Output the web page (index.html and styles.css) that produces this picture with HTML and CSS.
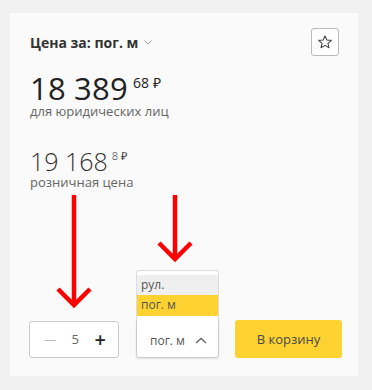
FILE: index.html
```html
<!DOCTYPE html>
<html lang="ru">
<head>
  <meta charset="UTF-8" />
  <title>Цена</title>
  <link rel="stylesheet" href="styles.css">
</head>
<body>

<div class="card">
  <div class="card-head">
    <div class="unit-title">Цена за: пог. м
      <svg class="unit-caret" width="8" height="5" viewBox="0 0 8 5"><path d="M0.5 0.5 L4 4 L7.5 0.5" fill="none" stroke="#999" stroke-width="1"/></svg>
    </div>
    <button class="fav-btn">
      <svg width="16" height="16" viewBox="0 0 24 24"><path d="M12 2.8 L14.8 9 L21.5 9.6 L16.4 14 L18 20.6 L12 17.1 L6 20.6 L7.6 14 L2.5 9.6 L9.2 9 Z" fill="none" stroke="#444" stroke-width="1.6" stroke-linejoin="round"/></svg>
    </button>
  </div>

  <div class="price-main">18 389<span class="kop">68 ₽</span></div>
  <div class="price-note">для юридических лиц</div>

  <div class="price-retail">19 168<span class="kop">8 ₽</span></div>
  <div class="price-note">розничная цена</div>

  <div class="actions">
    <div class="qty">
      <span class="qty-minus">—</span>
      <span class="qty-val">5</span>
      <span class="qty-plus">+</span>
    </div>
    <div class="unit-select">
      <ul class="unit-list">
        <li>рул.</li>
        <li class="active">пог. м</li>
      </ul>
      <span>пог. м</span>
      <svg width="12" height="7" viewBox="0 0 12 7"><path d="M1 6 L6 1.5 L11 6" fill="none" stroke="#666" stroke-width="1.4"/></svg>
    </div>
    <button class="cart-btn">В корзину</button>
  </div>

  <!-- стрелки поверх карточки -->
  <svg class="arrow arrow-left" width="40" height="115" viewBox="0 0 40 115">
    <path d="M19 0 V108" stroke="#ff0000" stroke-width="4.5"/>
    <path d="M3 94 L19 110 L35 94" fill="none" stroke="#ff0000" stroke-width="4.5"/>
  </svg>
  <svg class="arrow arrow-right" width="40" height="70" viewBox="0 0 40 70">
    <path d="M19 0 V63" stroke="#ff0000" stroke-width="4.5"/>
    <path d="M3 48 L19 64 L35 48" fill="none" stroke="#ff0000" stroke-width="4.5"/>
  </svg>
</div>

</body>
</html>
```

FILE: styles.css
```css
body {
  font-family: 'Open Sans', sans-serif;
  background-color: #f0f0f0;
  margin: 0;
  padding: 13px 14px 12px 10px;
}

.card {
  position: relative;
  background: #fafafa;
  padding: 14px 14px 18px 20px;
}

.card-head {
  display: flex;
  justify-content: space-between;
  align-items: center;
  height: 30px;
  padding-right: 6px;
}

.unit-title {
  font-size: 14px;
  font-weight: 700;
  color: #333;
  display: flex;
  align-items: center;
  gap: 6px;
}

.fav-btn {
  width: 28px;
  height: 28px;
  margin-right: -1px;
  border: 1px solid #bbb;
  border-radius: 3px;
  background: #fff;
  padding: 0;
  display: flex;
  align-items: center;
  justify-content: center;
}

.price-main {
  margin-top: 15px;
  font-size: 31px;
  line-height: 32px;
  color: #222;
  letter-spacing: 0.2px;
}

.price-main .kop {
  font-size: 14px;
  vertical-align: top;
  line-height: 22px;
  margin-left: 5px;
  letter-spacing: 0;
}

.price-note {
  font-size: 13px;
  line-height: 14px;
  color: #666;
}

.price-retail {
  margin-top: 29px;
  font-size: 25px;
  font-weight: 300;
  line-height: 28px;
  color: #333;
}

.price-retail .kop {
  font-size: 11px;
  vertical-align: top;
  line-height: 18px;
  margin-left: 4px;
}

.actions {
  display: flex;
  align-items: center;
  margin-top: 131px;
  height: 38px;
}

.qty {
  flex: none;
  width: 90px;
  height: 37px;
  box-sizing: border-box;
  border: 1px solid #ccc;
  border-radius: 3px;
  background: #fff;
  display: flex;
  align-items: center;
  justify-content: space-between;
  padding: 0 12px 0 14px;
  margin-left: -1px;
}

.qty-minus {
  color: #bbb;
  font-size: 12px;
}

.qty-val {
  color: #666;
  font-size: 13px;
}

.qty-plus {
  color: #222;
  font-size: 20px;
  font-weight: 600;
}

.unit-select {
  flex: none;
  position: relative;
  width: 83px;
  height: 38px;
  margin-left: 17px;
  box-sizing: border-box;
  border: 1px solid #ccc;
  border-radius: 0 0 3px 3px;
  background: #fff;
  display: flex;
  align-items: center;
  justify-content: space-between;
  padding: 2px 11px 0 13px;
  font-size: 12px;
  color: #555;
  box-shadow: 0 1px 2px rgba(0, 0, 0, 0.1);
}

.unit-list {
  position: absolute;
  left: -1px;
  right: -1px;
  bottom: 100%;
  margin: 0;
  padding: 4px 0 5px 0;
  list-style: none;
  background: #fff;
  border: 1px solid #ddd;
  border-bottom: none;
  border-radius: 3px 3px 0 0;
}

.unit-list li {
  height: 20px;
  line-height: 20px;
  padding-left: 4px;
  color: #555;
  background: #efefef;
}

.unit-list li.active {
  height: 21px;
  background: #fdd231;
}

.cart-btn {
  flex: none;
  width: 107px;
  height: 38px;
  margin-left: 16px;
  border: none;
  border-radius: 3px;
  background: #fdd231;
  color: #4a4a4a;
  font-family: 'Open Sans', sans-serif;
  font-size: 13px;
}

.arrow {
  position: absolute;
}

.arrow-left {
  left: 45px;
  top: 182px;
}

.arrow-right {
  left: 146px;
  top: 182px;
}
```
